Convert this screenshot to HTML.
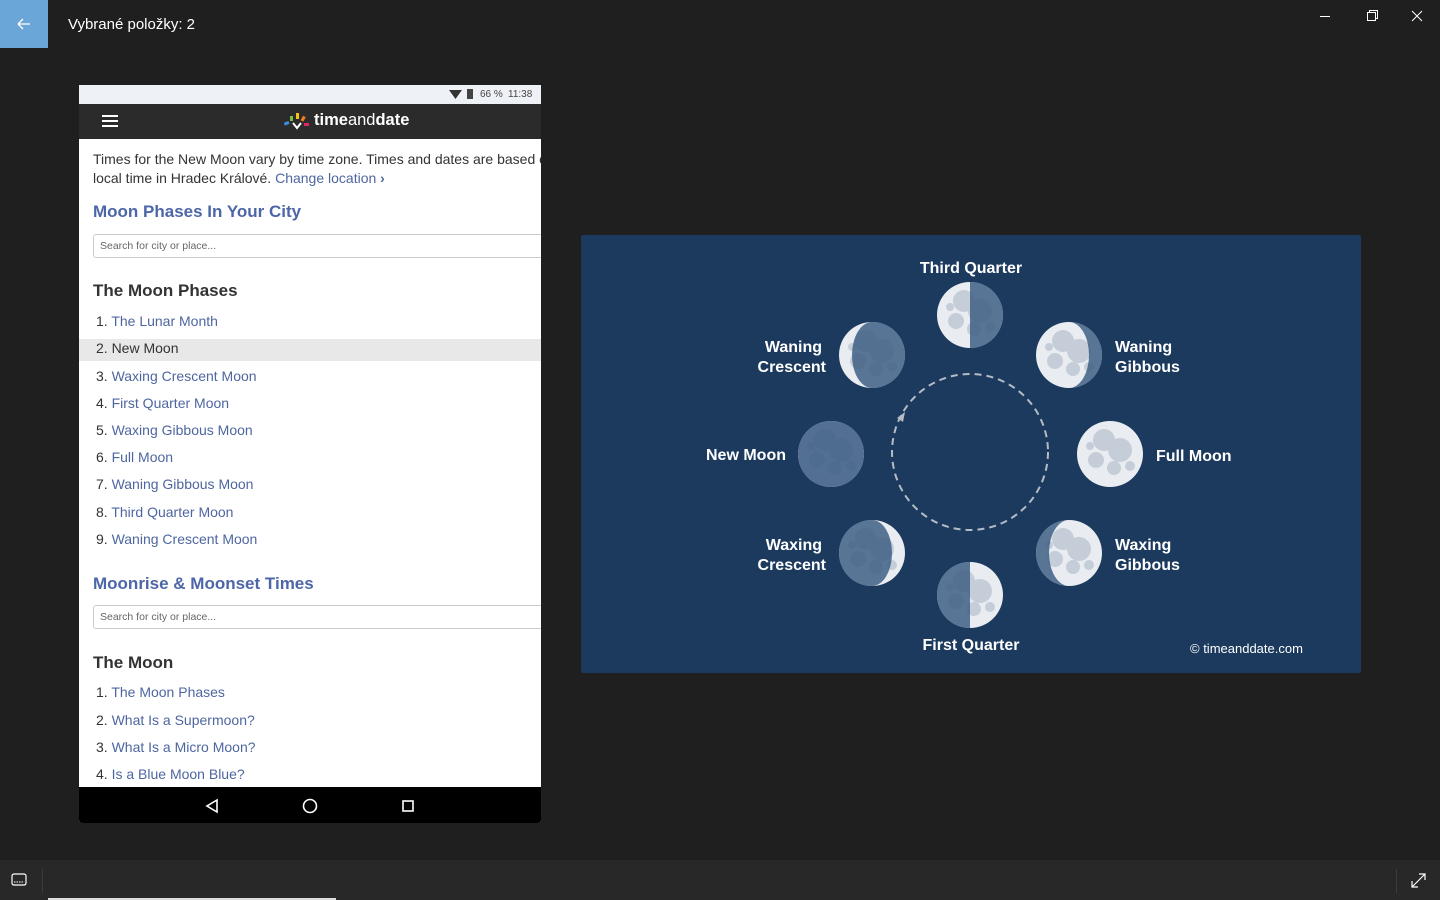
<!DOCTYPE html>
<html><head><meta charset="utf-8"><style>
*{margin:0;padding:0;box-sizing:border-box}
body{width:1440px;height:900px;background:#1f1f1f;font-family:"Liberation Sans",sans-serif;position:relative;overflow:hidden;color:#fff}
.abs{position:absolute}
#back{left:0;top:0;width:48px;height:48px;background:#6aa6d8}
#title{left:68px;top:16px;font-size:15px;color:#fff}
#bar{left:0;top:860px;width:1440px;height:40px;background:#282828}
#phone{left:79px;top:85px;width:462px;height:738px;background:#fff;overflow:hidden;border-radius:0 0 3px 3px}
.st{left:0;top:0;width:462px;height:19px;background:#eef1f6;font-size:10px;color:#444}
.nav{left:0;top:19px;width:462px;height:35px;background:#2b2b2b}
.p{font-size:14px;color:#333;line-height:19px}
.h{font-size:17px;font-weight:bold;color:#4d66a8}
.h2{font-size:17px;font-weight:bold;color:#333}
.li{font-size:14px;color:#333;left:17px}
.li span{color:#4e66a0}
.search{left:14px;width:460px;height:24px;border:1px solid #ccc;border-radius:3px;font-size:10.5px;color:#666;padding:5px 6px}
.sys{left:0;top:702px;width:462px;height:36px;background:#000}
</style></head><body>
<div class="abs" id="back"><svg width="48" height="48"><path d="M18 24h12M18 24l5-5M18 24l5 5" stroke="#fff" stroke-width="1.3" fill="none"/></svg></div>
<div class="abs" id="title">Vybrané položky: 2</div>
<svg class="abs" style="left:1310px;top:8px" width="120" height="20"><path d="M10 8.5h10" stroke="#fff"/><rect x="57.5" y="4.5" width="8" height="8" fill="none" stroke="#fff"/><path d="M59.5 4.5v-2h8v8h-2" fill="none" stroke="#fff"/><path d="M102 3l10 10M112 3l-10 10" stroke="#fff"/></svg>

<div class="abs" id="phone">
 <div class="abs st"><svg class="abs" style="left:370px;top:4px" width="30" height="12"><path d="M0 1 L13 1 L6.5 10Z" fill="#333"/><rect x="18" y="0" width="6" height="10" fill="#444"/></svg><span class="abs" style="left:401px;top:4px">66 %</span><span class="abs" style="left:429px;top:4px">11:38</span></div>
 <div class="abs nav">
  <svg class="abs" style="left:23px;top:10px" width="18" height="14"><path d="M0 2h16M0 7h16M0 12h16" stroke="#fff" stroke-width="2"/></svg>
  <svg class="abs" style="left:205px;top:9px" width="30" height="18"><rect x="0" y="9" width="5" height="3" fill="#3b8de0" transform="rotate(-20 2 10)"/><rect x="6" y="3" width="3" height="5" fill="#7cc042"/><rect x="12" y="0" width="3" height="6" fill="#f2c21b"/><rect x="18" y="3" width="3" height="5" fill="#f38020" transform="rotate(30 19 5)"/><rect x="20" y="10" width="5" height="3" fill="#e2256b"/><path d="M9 10l4 5 4-5" stroke="#fff" stroke-width="2" fill="none"/></svg>
  <span class="abs" style="left:235px;top:7px;font-size:16.5px;font-weight:bold;color:#fff">time<span style="font-weight:normal">and</span>date</span>
 </div>
 <div class="abs p" style="left:14px;top:65px;white-space:nowrap">Times for the New Moon vary by time zone. Times and dates are based o<br>local time in Hradec Králové. <span style="color:#4e66a0">Change location</span> <span style="color:#4e66a0;font-weight:bold">›</span></div>
 <div class="abs h" style="left:14px;top:117px">Moon Phases In Your City</div>
 <div class="abs search" style="top:149px">Search for city or place...</div>
 <div class="abs h2" style="left:14px;top:196px">The Moon Phases</div>
 <div class="abs" style="left:0;top:254px;width:462px;height:22px;background:#e8e8e8"></div>
 <div class="abs li" style="top:228px">1. <span>The Lunar Month</span></div>
 <div class="abs li" style="top:255px">2. New Moon</div>
 <div class="abs li" style="top:283px">3. <span>Waxing Crescent Moon</span></div>
 <div class="abs li" style="top:310px">4. <span>First Quarter Moon</span></div>
 <div class="abs li" style="top:337px">5. <span>Waxing Gibbous Moon</span></div>
 <div class="abs li" style="top:364px">6. <span>Full Moon</span></div>
 <div class="abs li" style="top:391px">7. <span>Waning Gibbous Moon</span></div>
 <div class="abs li" style="top:419px">8. <span>Third Quarter Moon</span></div>
 <div class="abs li" style="top:446px">9. <span>Waning Crescent Moon</span></div>
 <div class="abs h" style="left:14px;top:489px">Moonrise &amp; Moonset Times</div>
 <div class="abs search" style="top:520px">Search for city or place...</div>
 <div class="abs h2" style="left:14px;top:568px">The Moon</div>
 <div class="abs li" style="top:599px">1. <span>The Moon Phases</span></div>
 <div class="abs li" style="top:627px">2. <span>What Is a Supermoon?</span></div>
 <div class="abs li" style="top:654px">3. <span>What Is a Micro Moon?</span></div>
 <div class="abs li" style="top:681px">4. <span>Is a Blue Moon Blue?</span></div>
 <div class="abs sys"><svg width="462" height="36"><path d="M138 13v12l-10-6z" fill="none" stroke="#fff" stroke-width="1.6"/><circle cx="231" cy="19" r="6.5" fill="none" stroke="#fff" stroke-width="1.6"/><rect x="324" y="14" width="10" height="10" fill="none" stroke="#fff" stroke-width="1.6"/></svg></div>
</div>

<svg class="abs" style="left:581px;top:235px" width="780" height="438" font-family="Liberation Sans" font-weight="bold" font-size="16" fill="#fff">
<defs>
<g id="m"><circle r="33" fill="#e9edf2"/><circle cx="-6" cy="-14" r="11" fill="#c5cdd8"/><circle cx="10" cy="-4" r="12" fill="#c5cdd8"/><circle cx="-14" cy="6" r="8" fill="#c5cdd8"/><circle cx="4" cy="14" r="7" fill="#c5cdd8"/><circle cx="20" cy="12" r="5" fill="#c5cdd8"/><circle cx="-20" cy="-8" r="4" fill="#c5cdd8"/></g>
</defs>
<rect width="780" height="438" fill="#1c3a5e" rx="2"/>
<circle cx="389" cy="217" r="78" fill="none" stroke="#b4bcc6" stroke-width="2" stroke-dasharray="7 5"/>
<path d="M316 183l8 -6 -2 10z" fill="#b4bcc6"/>
<!-- Third quarter -->
<use href="#m" x="389" y="80"/><path d="M389 47A33 33 0 0 1 389 113Z" fill="#3e5f85" opacity=".85"/>
<!-- Waning crescent -->
<use href="#m" x="291" y="120"/><path d="M291 87A33 33 0 0 1 291 153A20 33 0 0 1 291 87Z" fill="#3e5f85" opacity=".85"/>
<!-- Waning gibbous -->
<use href="#m" x="488" y="120"/><path d="M488 87A33 33 0 0 1 488 153A20 33 0 0 0 488 87Z" fill="#3e5f85" opacity=".85"/>
<!-- New -->
<use href="#m" x="250" y="219"/><circle cx="250" cy="219" r="33" fill="#3e5f85" opacity=".88"/>
<!-- Full -->
<use href="#m" x="529" y="219"/>
<!-- Waxing crescent -->
<use href="#m" x="291" y="318"/><path d="M291 285A33 33 0 0 0 291 351A20 33 0 0 0 291 285Z" fill="#3e5f85" opacity=".85"/>
<!-- Waxing gibbous -->
<use href="#m" x="488" y="318"/><path d="M488 285A33 33 0 0 0 488 351A20 33 0 0 1 488 285Z" fill="#3e5f85" opacity=".85"/>
<!-- First quarter -->
<use href="#m" x="389" y="360"/><path d="M389 327A33 33 0 0 0 389 393Z" fill="#3e5f85" opacity=".85"/>
<text x="390" y="38" text-anchor="middle">Third Quarter</text>
<text x="241" y="117" text-anchor="end">Waning</text><text x="245" y="137" text-anchor="end">Crescent</text>
<text x="534" y="117">Waning</text><text x="534" y="137">Gibbous</text>
<text x="205" y="225" text-anchor="end">New Moon</text>
<text x="575" y="226">Full Moon</text>
<text x="241" y="315" text-anchor="end">Waxing</text><text x="245" y="335" text-anchor="end">Crescent</text>
<text x="534" y="315">Waxing</text><text x="534" y="335">Gibbous</text>
<text x="390" y="415" text-anchor="middle">First Quarter</text>
<text x="609" y="418" font-weight="normal" font-size="13">© timeanddate.com</text>
</svg>

<div class="abs" id="bar">
 <svg class="abs" style="left:10px;top:12px" width="20" height="16"><rect x="2" y="2" width="14" height="11" rx="2" fill="none" stroke="#fff" stroke-width="1.2"/><path d="M4 10h10" stroke="#fff" stroke-dasharray="1.5 1"/></svg>
 <div class="abs" style="left:42px;top:9px;width:1px;height:24px;background:#3c3c3c"></div>
 <div class="abs" style="left:1396px;top:9px;width:1px;height:24px;background:#3c3c3c"></div>
 <svg class="abs" style="left:1410px;top:12px" width="18" height="18"><path d="M2 15L15 2M9 2h6v6M2 9v6h6" stroke="#fff" stroke-width="1.2" fill="none"/></svg>
 <div class="abs" style="left:48px;top:38px;width:288px;height:2px;background:#ddd"></div>
</div>
</body></html>
